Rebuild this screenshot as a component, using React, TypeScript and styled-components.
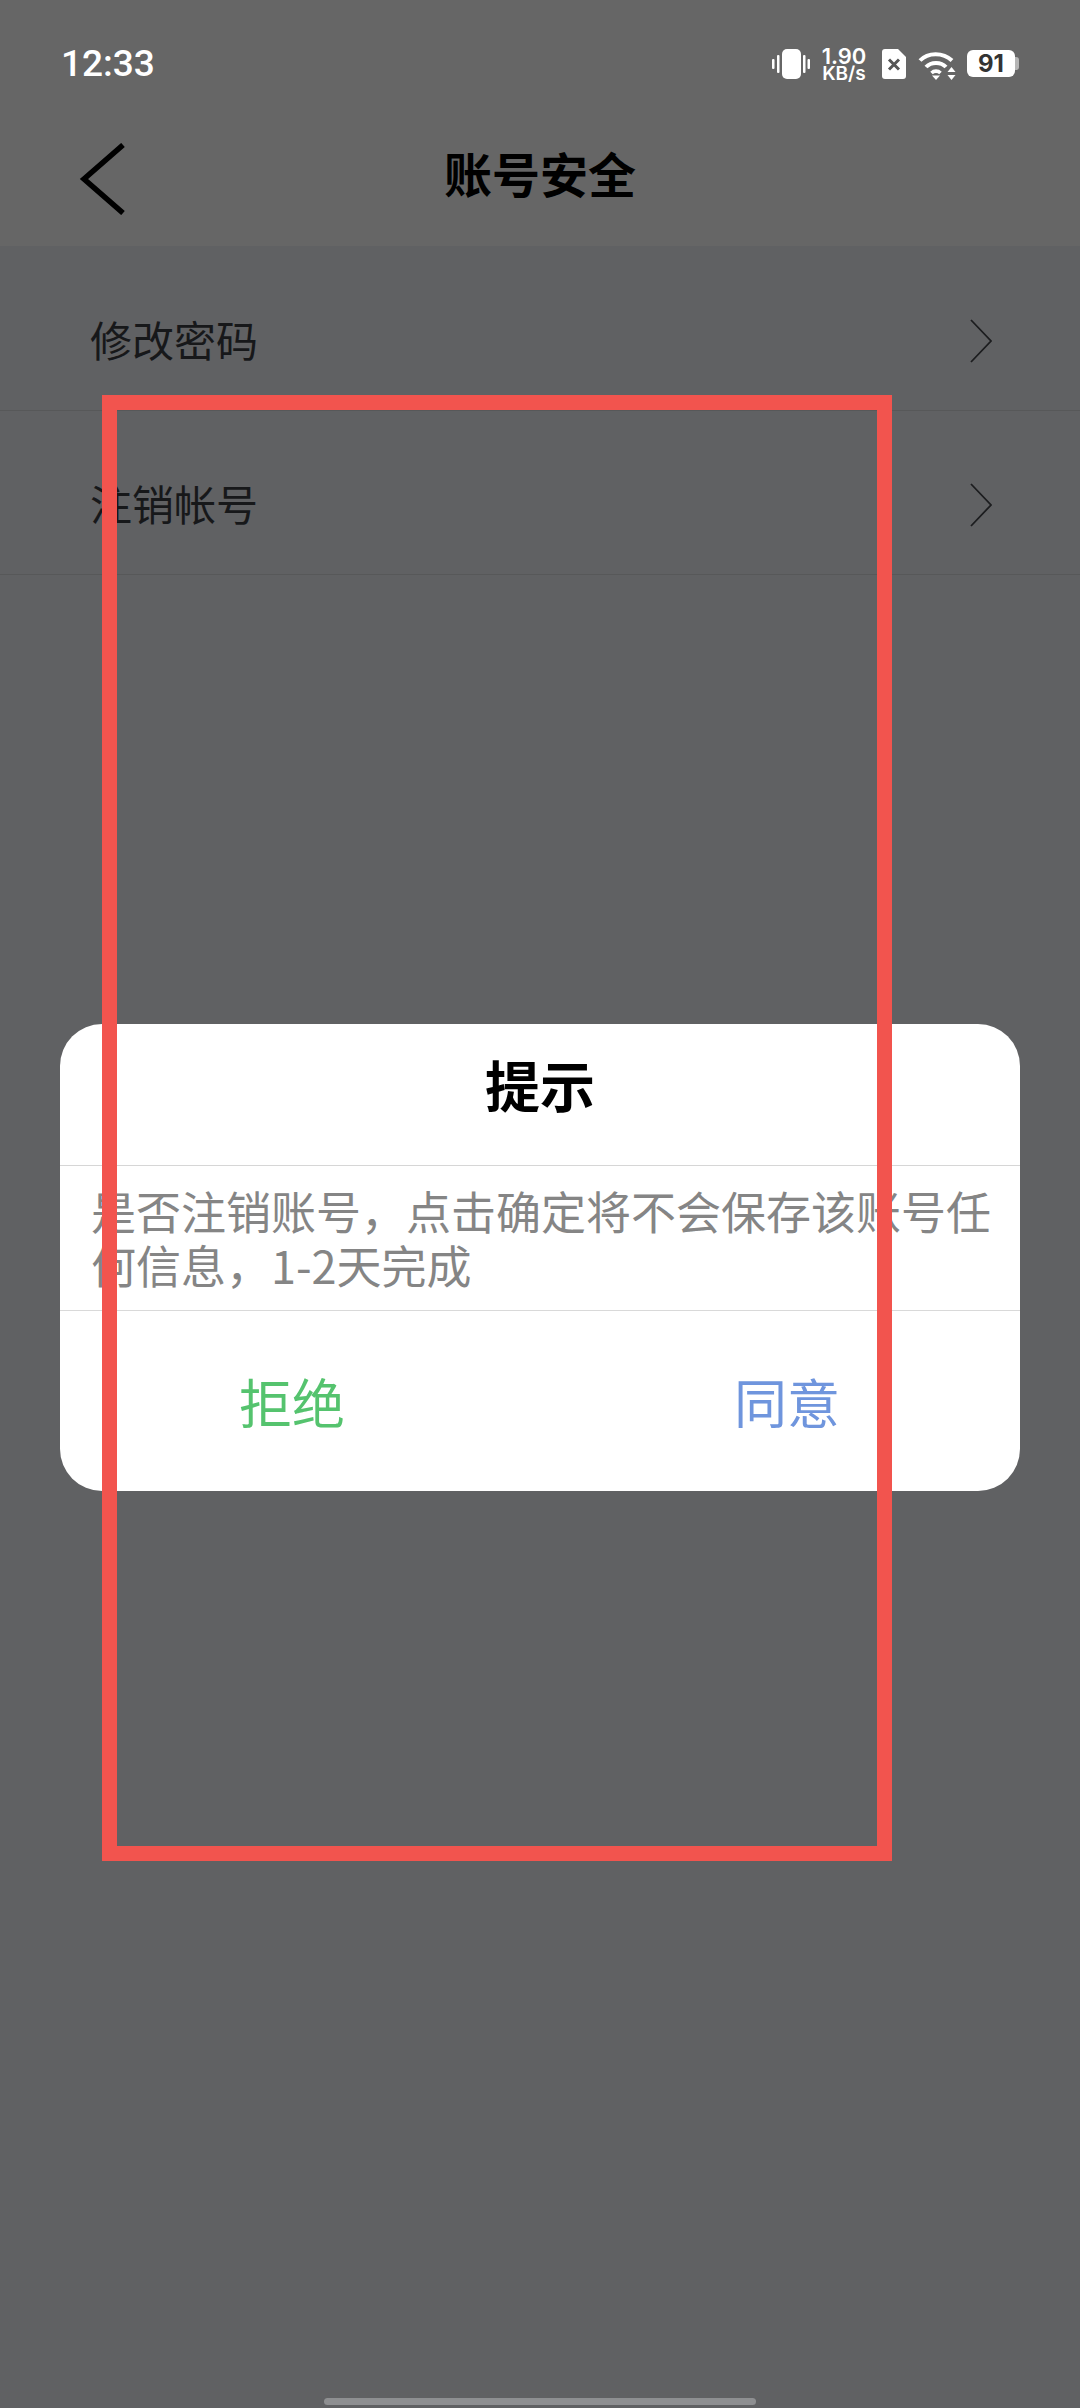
import React from 'react';
import styled, { createGlobalStyle } from 'styled-components';

const GlobalStyle = createGlobalStyle`
  html, body {
    margin: 0;
    padding: 0;
    background: #606163;
  }
  * {
    box-sizing: border-box;
  }
`;

const cjk = `"Noto Sans CJK SC", "Noto Sans", sans-serif`;

const Page = styled.div`
  position: relative;
  width: 1080px;
  height: 2408px;
  overflow: hidden;
  display: flex;
  flex-direction: column;
  background: #606163;
  font-family: ${cjk};
`;

const Header = styled.header`
  height: 246px;
  background: #666666;
  display: flex;
  flex-direction: column;
`;

const StatusBar = styled.div`
  height: 128px;
  padding: 47px 65px 0 61px;
  display: flex;
  justify-content: space-between;
  align-items: flex-start;
`;

const Time = styled.span`
  font-family: Roboto, sans-serif;
  font-size: 37px;
  font-weight: 500;
  line-height: 34px;
  color: #ffffff;
`;

const StatusIcons = styled.div`
  display: flex;
  align-items: flex-start;
  height: 34px;
`;

const Speed = styled.div`
  width: 46px;
  margin: 0 15px 0 11px;
  display: flex;
  flex-direction: column;
  align-items: center;
  font-family: Inter, sans-serif;
  color: #ffffff;
  font-weight: 600;
`;

const SpeedValue = styled.span`
  font-size: 22px;
  line-height: 18px;
`;

const SpeedUnit = styled.span`
  font-size: 19px;
  line-height: 18px;
  white-space: nowrap;
`;

const Battery = styled.div`
  margin: 3px 0 0 11px;
  width: 48px;
  height: 27px;
  border-radius: 6px;
  background: #ffffff;
  position: relative;
  display: flex;
  align-items: center;
  justify-content: center;
  font-family: Inter, sans-serif;
  font-size: 24px;
  font-weight: 700;
  color: #333333;

  &::after {
    content: '';
    position: absolute;
    right: -4px;
    top: 7px;
    width: 4px;
    height: 13px;
    border-radius: 0 3px 3px 0;
    background: #b5b5b5;
  }
`;

const NavBar = styled.nav`
  flex: 1;
  display: grid;
  grid-template-columns: 1fr auto 1fr;
  align-items: start;
  padding-top: 15px;
`;

const BackButton = styled.div`
  display: flex;
  padding-left: 79px;
`;

const Title = styled.h1`
  margin: 0;
  font-size: 48px;
  line-height: 58px;
  font-weight: 700;
  color: #000000;
`;

const List = styled.ul`
  list-style: none;
  margin: 0;
  padding: 0;
`;

const Row = styled.li`
  height: 164px;
  padding: 63px 87px 0 90px;
  border-bottom: 1.5px solid #575859;
  display: flex;
  justify-content: space-between;
  align-items: flex-start;
  margin-top: ${(p: { $first?: boolean }) => (p.$first ? '1px' : '0')};
`;

const RowLabel = styled.span`
  font-size: 42px;
  line-height: 58px;
  color: #17181a;
`;

const RowChevron = styled.svg`
  margin-top: 9px;
`;

const Scrim = styled.div`
  position: absolute;
  inset: 0;
  padding: 1024px 60px 0;
`;

const Dialog = styled.section`
  background: #ffffff;
  border-radius: 42px;
  height: 467px;
  display: flex;
  flex-direction: column;
  overflow: hidden;
`;

const DialogTitle = styled.h2`
  margin: 0;
  height: 142px;
  padding-top: 23px;
  text-align: center;
  font-size: 55px;
  line-height: 72px;
  font-weight: 700;
  color: #000000;
  border-bottom: 1.5px solid #d6d6d6;
`;

const DialogBody = styled.p`
  margin: 0;
  height: 145px;
  padding: 18px 20px 0 31px;
  font-size: 45px;
  line-height: 54px;
  color: #858585;
  border-bottom: 1.5px solid #d9d9d9;
`;

const DialogActions = styled.div`
  flex: 1;
  display: flex;
  justify-content: space-between;
  padding: 55px 180px 0 179px;
`;

const ActionButton = styled.button<{ $tone: string }>`
  border: none;
  background: none;
  padding: 0;
  font-family: ${cjk};
  font-size: 53px;
  line-height: 70px;
  height: 70px;
  color: ${(p) => p.$tone};
`;

// annotation drawn on top of the screenshot
const Marker = styled.div`
  position: absolute;
  left: 102px;
  top: 395px;
  width: 790px;
  height: 1466px;
  border: 15px solid #f2544e;
`;

const HomeBar = styled.div`
  position: absolute;
  left: 324px;
  top: 2398px;
  width: 432px;
  height: 7px;
  border-radius: 4px;
  background: #8e8f91;
`;

const VibrateIcon = () => (
  <svg width="38" height="30" viewBox="0 0 38 30" style={{ marginTop: 2 }}>
    <rect x="10" y="0" width="19" height="30" rx="5" fill="#fff" />
    <rect x="0" y="10" width="2.5" height="10" rx="1" fill="#fff" />
    <rect x="5" y="6" width="2.5" height="18" rx="1" fill="#fff" />
    <rect x="31" y="6" width="2.5" height="18" rx="1" fill="#fff" />
    <rect x="35.5" y="10" width="2.5" height="10" rx="1" fill="#fff" />
  </svg>
);

const SimIcon = () => (
  <svg width="24" height="30" viewBox="0 0 24 30" style={{ marginTop: 2 }}>
    <path d="M3 0H16L24 8V27a3 3 0 0 1-3 3H3a3 3 0 0 1-3-3V3a3 3 0 0 1 3-3Z" fill="#fff" />
    <path d="M7 10.5L17 20.5M17 10.5L7 20.5" stroke="#555" strokeWidth="3" />
  </svg>
);

const WifiIcon = () => (
  <svg width="38" height="29" viewBox="0 0 38 29" style={{ marginLeft: 12, marginTop: 4 }} fill="none">
    <path d="M2 9.5C10 1 25 1 34 9.5" stroke="#fff" strokeWidth="4" />
    <path d="M8 16C13 10.5 23 10.5 28 16" stroke="#fff" strokeWidth="4" />
    <path d="M13.5 22C16 19.5 20 19.5 22.5 22" stroke="#fff" strokeWidth="3.6" />
    <path d="M18 29L14 24.5H22Z" fill="#fff" />
    <path d="M33.5 16L37.5 21H29.5Z" fill="#fff" />
    <path d="M33.5 29L37.5 24H29.5Z" fill="#fff" />
  </svg>
);

const Chevron = () => (
  <RowChevron width="24" height="44" viewBox="0 0 24 44" fill="none">
    <path d="M2 1L22 22L2 43" stroke="#1c1d1f" strokeWidth="1.8" />
  </RowChevron>
);

export default function App() {
  return (
    <Page>
      <GlobalStyle />
      <Header>
        <StatusBar>
          <Time>12:33</Time>
          <StatusIcons>
            <VibrateIcon />
            <Speed>
              <SpeedValue>1.90</SpeedValue>
              <SpeedUnit>KB/s</SpeedUnit>
            </Speed>
            <SimIcon />
            <WifiIcon />
            <Battery>91</Battery>
          </StatusIcons>
        </StatusBar>
        <NavBar>
          <BackButton>
            <svg width="46" height="72" viewBox="0 0 46 72" fill="none">
              <path d="M44 2L5 36L44 70" stroke="#000" strokeWidth="5.5" />
            </svg>
          </BackButton>
          <Title>账号安全</Title>
        </NavBar>
      </Header>
      <List>
        <Row $first>
          <RowLabel>修改密码</RowLabel>
          <Chevron />
        </Row>
        <Row>
          <RowLabel>注销帐号</RowLabel>
          <Chevron />
        </Row>
      </List>
      <Scrim>
        <Dialog>
          <DialogTitle>提示</DialogTitle>
          <DialogBody>是否注销账号，点击确定将不会保存该账号任何信息，1-2天完成</DialogBody>
          <DialogActions>
            <ActionButton $tone="#55c36e">拒绝</ActionButton>
            <ActionButton $tone="#6f95dd">同意</ActionButton>
          </DialogActions>
        </Dialog>
      </Scrim>
      <Marker />
      <HomeBar />
    </Page>
  );
}
